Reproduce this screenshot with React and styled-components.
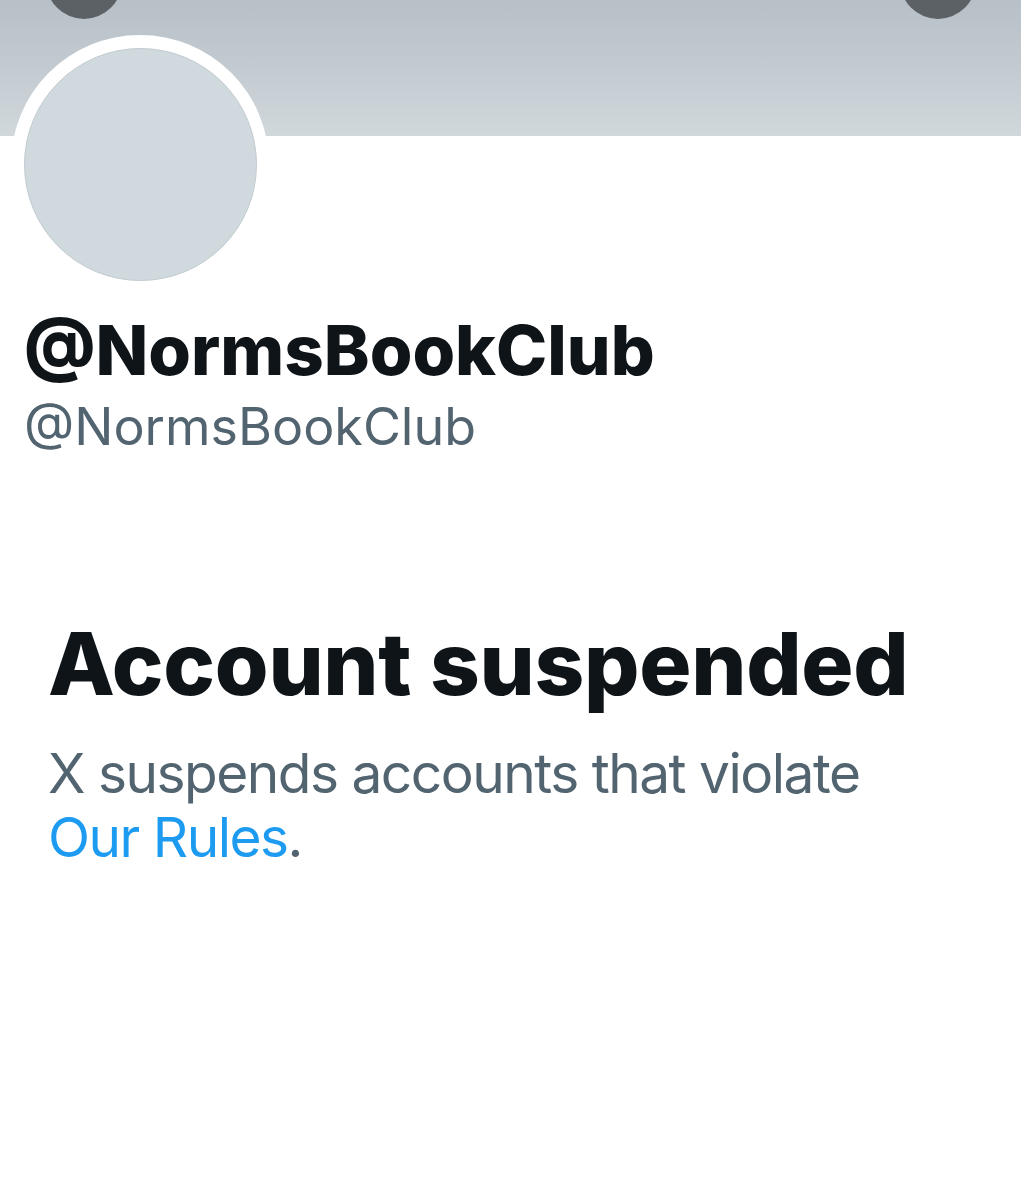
import styled, { createGlobalStyle } from "styled-components";

const GlobalStyle = createGlobalStyle`
  body {
    margin: 0;
    background: #ffffff;
    font-family: "Inter", "Liberation Sans", sans-serif;
  }
`;

function App() {
  return (
    <Page>
      <GlobalStyle />
      <Banner>
        <RoundButton />
        <RoundButton />
      </Banner>
      <Profile>
        <Avatar>
          <AvatarInner />
        </Avatar>
        <DisplayName>@NormsBookClub</DisplayName>
        <Handle>@NormsBookClub</Handle>
      </Profile>
      <Notice>
        <NoticeTitle>Account suspended</NoticeTitle>
        <NoticeText>
          X suspends accounts that violate <RulesLink href="#">Our Rules</RulesLink>.
        </NoticeText>
      </Notice>
    </Page>
  );
}

const Page = styled.main`
  width: 1021px;
  min-height: 1200px;
  background: #ffffff;
  overflow: hidden;
`;

const Banner = styled.header`
  height: 136px;
  background: linear-gradient(180deg, #b8c0c7 0%, #c3cbd1 50%, #d0d8dc 100%);
  display: flex;
  justify-content: space-between;
  padding: 0 45px 0 46px;
`;

const RoundButton = styled.span`
  width: 76px;
  height: 76px;
  margin-top: -57px;
  border-radius: 50%;
  background: #5c6165;
`;

const Profile = styled.section`
  padding: 0 0 0 11px;
  display: flex;
  flex-direction: column;
`;

const Avatar = styled.div`
  width: 258px;
  height: 258px;
  margin-top: -101px;
  border-radius: 50%;
  background: #ffffff;
  display: flex;
  align-items: center;
  justify-content: center;
`;

const AvatarInner = styled.div`
  width: 233px;
  height: 233px;
  box-sizing: border-box;
  border-radius: 50%;
  background: #cfd9de;
  border: 1px solid #c2cbd0;
`;

const DisplayName = styled.h1`
  margin: 16px 0 0 13px;
  font-size: 69px;
  font-weight: 800;
  line-height: 1.2;
  color: #0f1419;
`;

const Handle = styled.div`
  margin: 4px 0 0 13px;
  font-size: 52px;
  font-weight: 400;
  line-height: 1.2;
  color: #536471;
`;

const Notice = styled.section`
  padding: 154px 0 0 48px;
`;

const NoticeTitle = styled.h2`
  margin: 0;
  font-size: 87px;
  font-weight: 800;
  line-height: 1.2;
  letter-spacing: -0.3px;
  color: #0f1419;
`;

const NoticeText = styled.p`
  margin: 24px 0 0;
  width: 880px;
  font-size: 55px;
  font-weight: 400;
  line-height: 64px;
  letter-spacing: -1.5px;
  color: #536471;
`;

const RulesLink = styled.a`
  color: #1d9bf0;
  text-decoration: none;
`;

export default App;
